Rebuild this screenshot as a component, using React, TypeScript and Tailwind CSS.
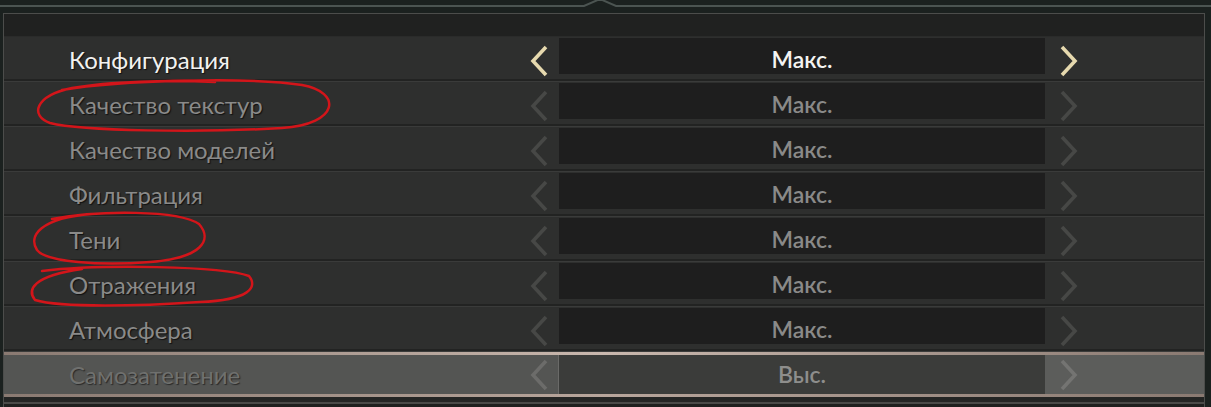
import React from 'react';

const rows = [
  { label: 'Конфигурация', value: 'Макс.' },
  { label: 'Качество текстур', value: 'Макс.' },
  { label: 'Качество моделей', value: 'Макс.' },
  { label: 'Фильтрация', value: 'Макс.' },
  { label: 'Тени', value: 'Макс.' },
  { label: 'Отражения', value: 'Макс.' },
  { label: 'Атмосфера', value: 'Макс.' },
  { label: 'Самозатенение', value: 'Выс.' },
];

function Chevron({ dir, color }: { dir: 'left' | 'right'; color: string }) {
  return (
    <svg width="20" height="32" viewBox="0 0 20 32" fill="none">
      {dir === 'left' ? (
        <path d="M17 2 L4 16 L17 30" stroke={color} strokeWidth="3.6" strokeLinejoin="miter" />
      ) : (
        <path d="M3 2 L16 16 L3 30" stroke={color} strokeWidth="3.6" strokeLinejoin="miter" />
      )}
    </svg>
  );
}

function SettingRow({ label, value, index }: { label: string; value: string; index: number }) {
  const active = index === 0;
  const hovered = index === rows.length - 1;

  if (hovered) {
    return (
      <div className="h-[45px] flex flex-col">
        <div className="h-[3px] bg-gradient-to-r from-[#8a7a72] via-[#c9b8ae] to-[#8a7a72]" />
        <div className="flex-1 flex items-stretch bg-[#545553]">
          <div className="flex-1 flex items-center pl-[65px] text-[24px] text-[#6f706e] [text-shadow:1px_1px_1px_#2a2a2a]">
            {label}
          </div>
          <div className="w-[40px] flex items-center justify-center border-r border-[#6a6a68]">
            <Chevron dir="left" color="#6c6c6a" />
          </div>
          <div className="w-[486px] flex items-center justify-center bg-[#3b3c3a] text-[23px] font-semibold text-[#8e8e8c]">
            {value}
          </div>
          <div className="w-[48px] flex items-center justify-center bg-[#5c5d5b]">
            <Chevron dir="right" color="#747472" />
          </div>
          <div className="w-[111px] bg-[#5c5d5b]" />
        </div>
        <div className="h-[3px] bg-gradient-to-r from-[#8a7a72] via-[#b8a69c] to-[#8a7a72]" />
      </div>
    );
  }

  return (
    <div className="h-[45px] flex flex-col bg-[#2e2f2e]">
      <div className="flex-1 flex items-stretch pt-[1px]">
        <div
          className={
            'flex-1 flex items-center pl-[65px] pt-[2px] text-[24px] [text-shadow:1px_1px_1px_#111] ' +
            (active ? 'text-[#f2f2f0]' : 'text-[#8a8a89]')
          }
        >
          {label}
        </div>
        <div className="w-[40px] flex items-center justify-center pt-[4px]">
          <Chevron dir="left" color={active ? '#e6d9ae' : '#474846'} />
        </div>
        <div
          className={
            'w-[486px] h-[36px] flex items-end justify-center bg-[#1e1e1e] text-[23px] font-semibold leading-[30px] ' +
            (active ? 'text-[#f4f4f2]' : 'text-[#8a8a89]')
          }
        >
          {value}
        </div>
        <div className="w-[48px] flex items-center justify-center pt-[4px]">
          <Chevron dir="right" color={active ? '#e6d9ae' : '#474846'} />
        </div>
        <div className="w-[111px]" />
      </div>
      <div className="h-[3px] bg-[#222322] border-b border-[#3a3b3a]" />
    </div>
  );
}

export default function App() {
  return (
    <div className="relative w-[1211px] h-[407px] overflow-hidden bg-[#1b211f] font-['Lato','Open_Sans',sans-serif]">
      <svg className="block" width="1211" height="13" viewBox="0 0 1211 13">
        <path d="M0 6 H584 L600 -1 L616 6 H1211" stroke="#4b5451" strokeWidth="2" fill="none" />
      </svg>
      <div className="mx-[3px] w-[1202px] border-x border-t border-[#4c4d4b] bg-[#2e2f2e]">
        <div className="h-[23px] bg-[#202120] border-b border-[#2a2b2a]" />
        {rows.map((r, i) => (
          <SettingRow key={r.label} label={r.label} value={r.value} index={i} />
        ))}
        <div className="h-[5px] bg-[#242524]" />
        <div className="h-[2px] bg-[#4a4a48]" />
        <div className="h-[10px] bg-[#1e1f1e]" />
      </div>

      <svg className="absolute inset-0 pointer-events-none" width="1211" height="407" viewBox="0 0 1211 407" fill="none">
        <path
          d="M62 90 C120 80 250 77 302 85 C342 92 340 124 282 128 C200 133 82 131 50 123 C30 116 34 96 72 88 C110 81 170 80 215 82"
          stroke="#d3151a"
          strokeWidth="2.5"
          strokeLinecap="round"
        />
        <path
          d="M52 219 C100 210 178 210 199 224 C213 240 202 258 150 262 C100 266 46 262 37 250 C28 236 40 218 92 214"
          stroke="#d3151a"
          strokeWidth="2.5"
          strokeLinecap="round"
        />
        <path
          d="M42 271 C100 264 222 266 249 276 C258 287 250 300 200 302 C140 306 62 308 35 300 C27 290 32 276 82 269"
          stroke="#d3151a"
          strokeWidth="2.5"
          strokeLinecap="round"
        />
      </svg>
    </div>
  );
}
